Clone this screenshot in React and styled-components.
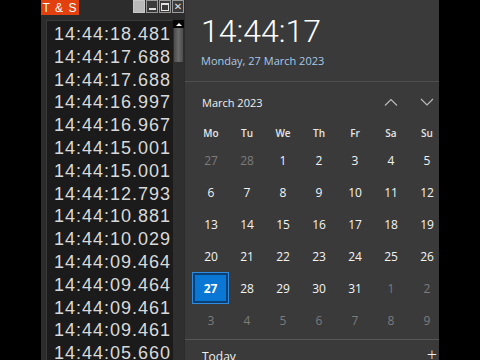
import React from "react";
import styled, { createGlobalStyle } from "styled-components";

const GlobalStyle = createGlobalStyle`
  html, body {
    margin: 0;
    padding: 0;
    background: #000;
  }
  body {
    width: 480px;
    height: 360px;
    overflow: hidden;
  }
`;

let Screen = styled.div`
  width: 480px;
  height: 360px;
  box-sizing: border-box;
  padding-left: 41px;
  display: flex;
  background: #000;
  overflow: hidden;
`;

let TsWindow = styled.div`
  width: 143px;
  height: 360px;
  flex-shrink: 0;
  display: flex;
  flex-direction: column;
  background: #2c2c2c;
`;

let TitleBar = styled.div`
  height: 20px;
  flex-shrink: 0;
  display: flex;
  align-items: flex-start;
`;

let TitleTag = styled.div`
  width: 38px;
  height: 15px;
  background: #e2410f;
  color: #fff;
  font: 12px "Liberation Sans", Arial, sans-serif;
  letter-spacing: 1px;
  display: flex;
  align-items: center;
  justify-content: center;
`;

let WinButtons = styled.div`
  margin-left: auto;
  display: flex;
  gap: 1px;
`;

let WinButton = styled.div`
  width: 12px;
  height: 13px;
  box-sizing: border-box;
  border: 1px solid ${(p) => (p.light ? "#c8c8c8" : "#9a9a9a")};
  background: ${(p) => (p.light ? "#b9b9b9" : "#3a3a3a")};
  display: flex;
  align-items: center;
  justify-content: center;
  color: #e0e0e0;
  font: bold 10px "DejaVu Sans", sans-serif;
  line-height: 1;
`;

let MinLine = styled.div`
  width: 7px;
  height: 2px;
  background: #e0e0e0;
  margin-top: 5px;
`;

let MaxBox = styled.div`
  width: 6px;
  height: 5px;
  border: 1px solid #e0e0e0;
  border-top-width: 2px;
`;

let TsBody = styled.div`
  flex: 1;
  display: flex;
  min-height: 0;
`;

let TimeList = styled.div`
  flex: 1;
  margin-left: 5px;
  background: #1b1b1b;
  border-left: 1px solid #3a3a3a;
  border-top: 1px solid #3a3a3a;
  padding: 2px 0 0 7px;
  overflow: hidden;
`;

let TimeRow = styled.div`
  font: 18px "Liberation Sans", Arial, sans-serif;
  letter-spacing: 1px;
  line-height: 22.8px;
  color: #d9d9d9;
  white-space: nowrap;
`;

let ScrollTrack = styled.div`
  width: 11px;
  background: #2f2f2f;
  display: flex;
  flex-direction: column;
`;

let ScrollArrow = styled.div`
  height: 8px;
  background: #050505;
  display: flex;
  align-items: center;
  justify-content: center;
  &::after {
    content: "";
    border-left: 3px solid transparent;
    border-right: 3px solid transparent;
    border-bottom: 3px solid #fff;
  }
`;

let ScrollThumb = styled.div`
  height: 34px;
  margin: 0 1px;
  background: linear-gradient(90deg, #4c4c4c, #6a6a6a 50%, #4c4c4c);
`;

let Flyout = styled.div`
  width: 255px;
  height: 360px;
  flex-shrink: 0;
  background: #3a3a3a;
  border-left: 1px solid #2c2c2c;
  box-sizing: border-box;
  overflow: hidden;
  display: flex;
  flex-direction: column;
  font-family: "Open Sans", "Noto Sans", sans-serif;
`;

let ClockHead = styled.div`
  height: 82px;
  flex-shrink: 0;
  box-sizing: border-box;
  padding: 10px 0 0 16px;
  border-bottom: 1px solid #4f4f4f;
`;

let BigClock = styled.div`
  font-family: Roboto, "Open Sans", sans-serif;
  font-weight: 300;
  font-size: 32px;
  line-height: 42px;
  color: #fff;
`;

let DateLine = styled.div`
  font-size: 11px;
  line-height: 16px;
  margin-top: 1px;
  color: #a9c9e8;
`;

let Calendar = styled.div`
  flex-shrink: 0;
  padding-left: 8px;
  display: grid;
  grid-template-columns: repeat(7, 36px);
  grid-template-rows: 40px 22px repeat(6, 32px);
  width: 252px;
`;

let MonthLabel = styled.div`
  grid-column: 1 / 6;
  padding-left: 9px;
  display: flex;
  align-items: center;
  color: #f0f0f0;
  font-size: 11px;
`;

let NavCell = styled.div`
  display: flex;
  align-items: center;
  justify-content: center;
`;

let DayHead = styled.div`
  display: flex;
  align-items: center;
  justify-content: center;
  font-size: 10px;
  font-weight: 600;
  color: #e6e6e6;
`;

let DayCell = styled.div`
  display: flex;
  align-items: center;
  justify-content: center;
  font-size: 12px;
  color: ${(p) => (p.muted ? "#7c7c7c" : "#f4f4f4")};
`;

let TodayCell = styled.div`
  margin: 1px 1px 1px 0;
  display: flex;
  align-items: center;
  justify-content: center;
  background: #0a77d4;
  border: 2px solid #0c3f73;
  outline: 1px solid #2f8be0;
  color: #fff;
  font-size: 12px;
  font-weight: 700;
`;

let Footer = styled.div`
  flex-shrink: 0;
  margin-top: 3px;
  border-top: 1px solid #565656;
  display: flex;
  align-items: flex-start;
  padding: 9px 0 0 17px;
  color: #f0f0f0;
  font-size: 12px;
  line-height: 16px;
`;

let Plus = styled.span`
  margin-left: auto;
  margin-right: 2px;
  margin-top: -3px;
  font-size: 18px;
  font-weight: 300;
`;

const Chevron = ({ up }) => (
  <svg width="14" height="8" viewBox="0 0 14 8">
    <path
      d={up ? "M1 7.5 L7 1.5 L13 7.5" : "M1 1 L7 7 L13 1"}
      fill="none"
      stroke="#bdbdbd"
      strokeWidth="1.1"
    />
  </svg>
);

const times = [
  "14:44:18.481",
  "14:44:17.688",
  "14:44:17.688",
  "14:44:16.997",
  "14:44:16.967",
  "14:44:15.001",
  "14:44:15.001",
  "14:44:12.793",
  "14:44:10.881",
  "14:44:10.029",
  "14:44:09.464",
  "14:44:09.464",
  "14:44:09.461",
  "14:44:09.461",
  "14:44:05.660",
];

const dayNames = ["Mo", "Tu", "We", "Th", "Fr", "Sa", "Su"];

const days = [
  [27, true], [28, true],
  ...Array.from({ length: 31 }, (_, i) => [i + 1, false]),
  ...Array.from({ length: 9 }, (_, i) => [i + 1, true]),
];

const App = () => {
  return (
    <>
      <GlobalStyle />
      <Screen>
        <TsWindow>
          <TitleBar>
            <TitleTag>T &amp; S</TitleTag>
            <WinButtons>
              <WinButton light />
              <WinButton>
                <MinLine />
              </WinButton>
              <WinButton>
                <MaxBox />
              </WinButton>
              <WinButton>✕</WinButton>
            </WinButtons>
          </TitleBar>
          <TsBody>
            <TimeList>
              {times.map((t, i) => (
                <TimeRow key={i}>{t}</TimeRow>
              ))}
            </TimeList>
            <ScrollTrack>
              <ScrollArrow />
              <ScrollThumb />
            </ScrollTrack>
          </TsBody>
        </TsWindow>
        <Flyout>
          <ClockHead>
            <BigClock>14:44:17</BigClock>
            <DateLine>Monday, 27 March 2023</DateLine>
          </ClockHead>
          <Calendar>
            <MonthLabel>March 2023</MonthLabel>
            <NavCell>
              <Chevron up />
            </NavCell>
            <NavCell>
              <Chevron />
            </NavCell>
            {dayNames.map((d) => (
              <DayHead key={d}>{d}</DayHead>
            ))}
            {days.map(([n, muted], i) =>
              !muted && n === 27 ? (
                <TodayCell key={i}>{n}</TodayCell>
              ) : (
                <DayCell key={i} muted={muted}>
                  {n}
                </DayCell>
              )
            )}
          </Calendar>
          <Footer>
            Today
            <Plus>+</Plus>
          </Footer>
        </Flyout>
      </Screen>
    </>
  );
};

export default App;
